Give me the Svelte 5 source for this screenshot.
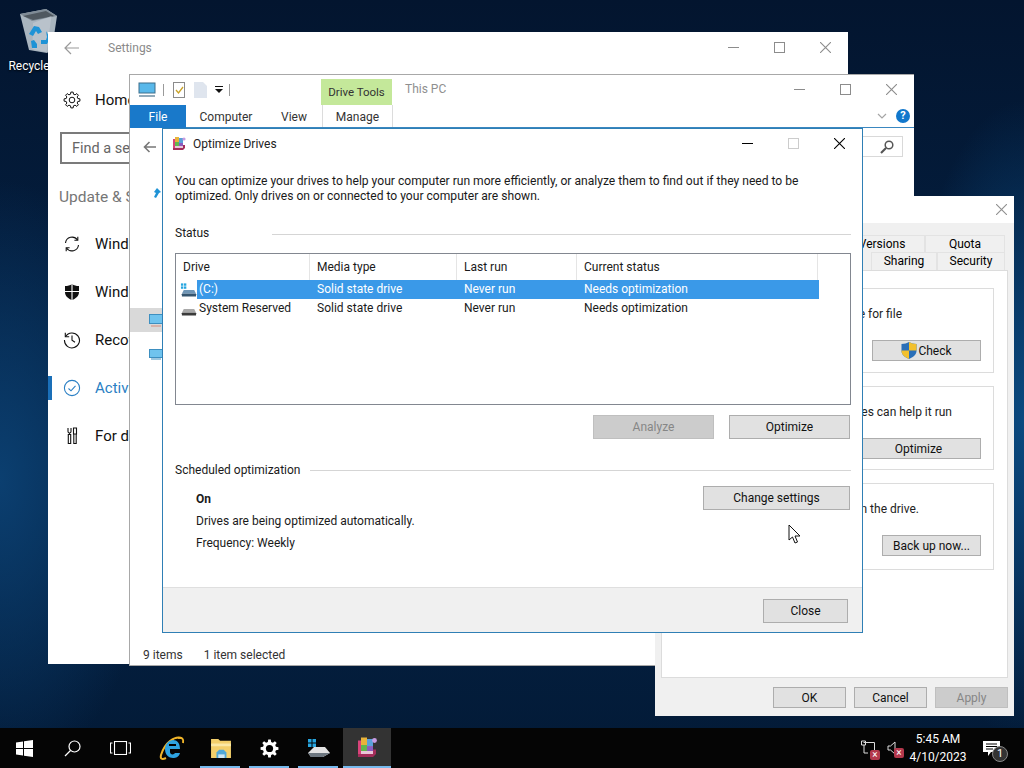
<script>
    // outline of a cog, used by the settings entries
    function cog(cx, cy, ro, ri, teeth) {
        let d = ''
        const step = (Math.PI * 2) / teeth
        for (let i = 0; i < teeth; i++) {
            const a = i * step
            const pts = [[a - step * 0.32, ri], [a - step * 0.18, ro], [a + step * 0.18, ro], [a + step * 0.32, ri]]
            for (const [t, r] of pts) {
                d += (d ? 'L' : 'M') + (cx + Math.cos(t) * r).toFixed(2) + ' ' + (cy + Math.sin(t) * r).toFixed(2)
            }
        }
        return d + 'Z'
    }

    const columns = ['Drive', 'Media type', 'Last run', 'Current status']
    const drives = [
        { name: '(C:)', selected: true, system: true },
        { name: 'System Reserved', selected: false, system: false }
    ]
    const navItems = [
        { label: 'Windows Update', icon: 'sync' },
        { label: 'Windows Security', icon: 'shield' },
        { label: 'Recovery', icon: 'history' },
        { label: 'Activation', icon: 'check', active: true },
        { label: 'For developers', icon: 'tools' }
    ]
</script>

{#snippet defrag(size)}
    <svg width={size} height={size} viewBox="0 0 16 16">
        <rect x="2" y="3" width="10" height="11" fill="#d8437a"/>
        <rect x="4" y="1" width="4" height="5" fill="#e8b33a"/>
        <rect x="8" y="2" width="4" height="5" fill="#5a9fd8"/>
        <rect x="4" y="6" width="4" height="4" fill="#62b74e"/>
        <rect x="8" y="7" width="4" height="4" fill="#8a5bc0"/>
        <rect x="4" y="10" width="8" height="2" fill="#e9c6d8"/>
        <path d="M2 14h10l2-2V9h-2v3H2z" fill="#a32d5a"/>
        <circle cx="13" cy="3" r="1.6" fill="#c79be0"/>
    </svg>
{/snippet}

{#snippet driveIcon(system)}
    <svg width="18" height="18" viewBox="0 0 18 18">
        {#if system}
            <rect x="1" y="2" width="2.5" height="2.5" fill="#27a6e0"/>
            <rect x="4.2" y="2" width="2.5" height="2.5" fill="#27a6e0"/>
            <rect x="1" y="5.2" width="2.5" height="2.5" fill="#27a6e0"/>
            <rect x="4.2" y="5.2" width="2.5" height="2.5" fill="#27a6e0"/>
        {/if}
        <path d="M2 13l2-4h11l2 4z" fill={system ? '#6f95b5' : '#a9a9a9'}/>
        <rect x="2" y="13" width="15" height="3" rx="0.5" fill={system ? '#35556f' : '#3b3b3b'}/>
    </svg>
{/snippet}

{#snippet closeX(size, color)}
    <svg width={size} height={size} viewBox="0 0 10 10"><path d="M0 0l10 10M10 0L0 10" stroke={color} fill="none"/></svg>
{/snippet}

{#snippet controls(color, maxColor)}
    <div class="controls">
        <span class="ctl"><svg width="11" height="11" viewBox="0 0 11 11"><path d="M0 5.5h11" stroke={color}/></svg></span>
        <span class="ctl"><svg width="11" height="11" viewBox="0 0 11 11"><rect x="0.5" y="0.5" width="10" height="10" fill="none" stroke={maxColor}/></svg></span>
        <span class="ctl">{@render closeX(11, color)}</span>
    </div>
{/snippet}

{#snippet navIcon(name)}
    <svg width="18" height="18" viewBox="0 0 18 18" fill="none" stroke="currentColor" stroke-width="1.1">
        {#if name === 'sync'}
            <path d="M2.5 8A6.6 6.6 0 0 1 14.5 5M15.500 10a6.600 6.600 0 0 1-12 3"/>
            <path d="M14.800 1.800V5.300h-3.400M3.200 16.200v-3.500h3.400"/>
        {:else if name === 'shield'}
            <path d="M9 1c2 1.400 4.200 2 7 2v6c0 4-3 6.500-7 8-4-1.500-7-4-7-8V3c2.800 0 5-.6 7-2z" fill="currentColor" stroke="none"/>
            <path d="M9 1v16M2 8.500h14" stroke="#fff"/>
        {:else if name === 'history'}
            <path d="M2.600 5.500A7.500 7.500 0 1 1 1.500 9"/>
            <path d="M2.300 1.800v3.900h3.900M9 4.500V9.300l3 2"/>
        {:else if name === 'check'}
            <circle cx="9" cy="9" r="7.600"/>
            <path d="M5.500 9.500l2.500 2.300 4.500-5"/>
        {:else}
            <path d="M5 1v3.500a1.500 1.500 0 0 0 3 0V1M6.500 6.500v1M5.300 7.500h2.400v9H5.300zM10.500 1h3v6h-3zM10.800 7h2.400v9.500h-2.400z"/>
        {/if}
    </svg>
{/snippet}

<main class="desktop">
    <div class="recycle">
        <svg width="40" height="44" viewBox="0 0 40 44">
            <path d="M1 5l26-5 11 7-5 33-5 4-18-3z" fill="#a9b5bf"/>
            <path d="M1 5l26-5 11 7-25 5z" fill="#7f8b96"/>
            <path d="M4 7l23-5 8 5-21 4z" fill="#4f5860"/>
            <path d="M14 14l-.5 26 14 3 5-36z" fill="#c4ccd3" opacity="0.6"/>
            <path d="M10 25l5-8 5 1 3 5-4 2-2-3-3 5zM27 22l4 7-3 6h-6v-4l5 0 1-3zM12 32l3-1 3 4v4h-5z" fill="#1f93d6"/>
        </svg>
        <span>Recycle Bin</span>
    </div>

    <section class="window settings">
        <header class="set-title">
            <svg class="set-back" width="16" height="14" viewBox="0 0 16 14" fill="none" stroke="#9a9a9a" stroke-width="1.200"><path d="M15 7H1M7 1L1 7l6 6"/></svg>
            <span>Settings</span>
            {@render controls('#8c8c8c', '#8c8c8c')}
        </header>
        <div class="set-nav">
            <div class="home">
                <svg width="18" height="18" viewBox="0 0 18 18" fill="none" stroke="#111"><path d={cog(9, 9, 8, 6, 8)}/><circle cx="9" cy="9" r="2.800"/></svg>
                <span>Home</span>
            </div>
            <div class="find">Find a setting</div>
            <div class="group-title">Update &amp; Security</div>
            <ul>
                {#each navItems as item}
                    <li class:active={item.active}>
                        {@render navIcon(item.icon)}
                        <span>{item.label}</span>
                    </li>
                {/each}
            </ul>
        </div>
    </section>

    <section class="window explorer">
        <div class="qat">
            <svg width="20" height="16" viewBox="0 0 20 16"><rect x="2" y="1" width="16" height="10" fill="#58b8ea" stroke="#3d6f8c"/><path d="M2 14h16" stroke="#6d8ea3" stroke-width="1.500"/></svg>
            <i class="sep"></i>
            <svg class="qat-doc" width="13" height="16" viewBox="0 0 13 16"><rect x="0.500" y="0.500" width="11" height="15" fill="#fff" stroke="#8b8b8b"/><path d="M3 8l2.500 3L10 5" stroke="#c9a227" stroke-width="1.300" fill="none"/></svg>
            <svg width="13" height="16" viewBox="0 0 13 16"><path d="M0 0h9l4 4v12H0z" fill="#dfe5ee"/></svg>
            <svg class="qat-drop" width="8" height="8" viewBox="0 0 8 8"><path d="M0 0h8v1H0zM0 3h8L4 7z" fill="#111"/></svg>
            <i class="sep"></i>
            <div class="tool-tab">Drive Tools</div>
            <div class="path-title">This PC</div>
            {@render controls('#8c8c8c', '#8c8c8c')}
        </div>
        <nav class="ribbon">
            <span class="file">File</span>
            <span class="tab computer">Computer</span>
            <span class="tab view">View</span>
            <span class="tab manage">Manage</span>
            <svg class="chev" width="10" height="6" viewBox="0 0 10 6" fill="none" stroke="#a5a5a5" stroke-width="1.200"><path d="M1 1l4 4 4-4"/></svg>
            <span class="help">?</span>
        </nav>
        <div class="addr">
            <svg width="13" height="12" viewBox="0 0 13 12" fill="none" stroke="#777" stroke-width="1.600"><path d="M13 6H1.500M6.500 1L1.500 6l5 5"/></svg>
            <div class="search">
                <svg width="14" height="14" viewBox="0 0 14 14" fill="none" stroke="#555" stroke-width="1.500"><circle cx="9" cy="5" r="3.800"/><path d="M6 8l-5 5" stroke-width="2.200"/></svg>
            </div>
        </div>
        <div class="tree">
            <div class="tree-row"><svg width="10" height="12" viewBox="0 0 10 12"><path d="M4 1l4 4-2 1-3 5-2-1 2-4-2-1z" fill="#1f93d6"/></svg></div>
            <div class="tree-row current"><svg width="14" height="13" viewBox="0 0 14 13"><rect x="0.500" y="0.500" width="13" height="9" fill="#6fc3ee" stroke="#3d8fc0"/><path d="M2 12h10" stroke="#d38b7a"/></svg></div>
            <div class="tree-row"><svg width="14" height="13" viewBox="0 0 14 13"><rect x="0.500" y="2.500" width="13" height="8" fill="#6fc3ee" stroke="#3d8fc0"/><path d="M2 12h10" stroke="#3d8fc0"/></svg></div>
        </div>
        <footer class="status">
            <span>9 items</span>
            <span>1 item selected</span>
        </footer>
    </section>

    <section class="window props">
        <header class="props-title">
            <span class="props-close">{@render closeX(11, '#8f8f8f')}</span>
        </header>
        <div class="tabs">
            <div class="tab-row one"><span class="t">Previous Versions</span><span class="t">Quota</span></div>
            <div class="tab-row two"><span class="t">Sharing</span><span class="t">Security</span></div>
        </div>
        <div class="panel">
            <div class="box b1">
                <p class="p1">This option will check the drive for file</p>
                <div class="box-foot"><button class="btn w-check">
                    <svg width="16" height="17" viewBox="0 0 16 17"><path d="M8 0c2 1.300 4.500 2 7.500 2v7c0 3.500-3.500 6.500-7.500 8-4-1.500-7.500-4.500-7.500-8V2C3.500 2 6 1.300 8 0z" fill="#2a6fb8"/><path d="M8 0v8.500h7.500V2C12.500 2 10 1.300 8 0zM8 8.500V17c-4-1.500-7.500-4.500-7.500-8v-.5z" fill="#f2c02e"/></svg>
                    Check</button></div>
            </div>
            <div class="box b2">
                <p class="p2">Optimizing your computer's drives can help it run</p>
                <div class="box-foot"><button class="btn w-opt">Optimize</button></div>
            </div>
            <div class="box b3">
                <p class="p3">Back up all of the files on the drive.</p>
                <div class="box-foot"><button class="btn w-back">Back up now...</button></div>
            </div>
        </div>
        <div class="props-foot">
            <button class="btn w-ok">OK</button>
            <button class="btn w-ok">Cancel</button>
            <button class="btn w-ok off">Apply</button>
        </div>
    </section>

    <section class="window dialog">
        <header class="dlg-title">
            {@render defrag(16)}
            <span>Optimize Drives</span>
            <div class="controls">
                <span class="ctl"><svg width="11" height="11" viewBox="0 0 11 11"><path d="M0 5.500h11" stroke="#000"/></svg></span>
                <span class="ctl"><svg width="11" height="11" viewBox="0 0 11 11"><rect x="0.500" y="0.500" width="10" height="10" fill="none" stroke="#ccc"/></svg></span>
                <span class="ctl">{@render closeX(11, '#000')}</span>
            </div>
        </header>
        <div class="dlg-body">
            <p class="intro">You can optimize your drives to help your computer run more efficiently, or analyze them to find out if they need to be optimized. Only drives on or connected to your computer are shown.</p>
            <div class="rule s1"><span>Status</span><i></i></div>
            <div class="table">
                <div class="thead">
                    {#each columns as c}<span>{c}</span>{/each}
                </div>
                {#each drives as d}
                    <div class="row">
                        <span class="ico">{@render driveIcon(d.system)}</span>
                        <div class="cells" class:sel={d.selected}>
                            <span class="c-name">{d.name}</span>
                            <span>Solid state drive</span>
                            <span>Never run</span>
                            <span>Needs optimization</span>
                        </div>
                    </div>
                {/each}
            </div>
            <div class="actions">
                <button class="btn w-dlg off">Analyze</button>
                <button class="btn w-dlg">Optimize</button>
            </div>
            <div class="rule s2"><span>Scheduled optimization</span><i></i></div>
            <div class="sched">
                <div class="sched-text">
                    <strong>On</strong>
                    <span>Drives are being optimized automatically.</span>
                    <span>Frequency: Weekly</span>
                </div>
                <button class="btn w-change">Change settings</button>
            </div>
        </div>
        <footer class="dlg-foot">
            <button class="btn w-close">Close</button>
        </footer>
    </section>

    <svg class="cursor" width="14" height="20" viewBox="0 0 14 20"><path d="M1 1v15l3.500-3 2.500 6 2.500-1-2.500-6h5z" fill="#fff" stroke="#111"/></svg>

    <footer class="taskbar">
        <span class="tb">
            <svg width="17" height="17" viewBox="0 0 17 17" fill="#fff"><path d="M0 2.400l7-1V8H0zM8 1.300L17 0v8H8zM0 9h7v6.600l-7-1zM8 9h9v8l-9-1.300z"/></svg>
        </span>
        <span class="tb">
            <svg width="17" height="17" viewBox="0 0 17 17" fill="none" stroke="#fff" stroke-width="1.200"><circle cx="10.500" cy="6.500" r="5.500"/><path d="M6.500 10.500L1 16"/></svg>
        </span>
        <span class="tb">
            <svg width="21" height="14" viewBox="0 0 21 14" fill="none" stroke="#fff" stroke-width="1.100"><rect x="4.500" y="0.500" width="12" height="13"/><path d="M2.500 2H.5v10h2M18.500 2h2v10h-2"/></svg>
        </span>
        <span class="tb gap">
            <svg width="26" height="26" viewBox="0 0 26 26" fill="none">
                <path d="M22 3C16 1 6 7 2 20c-1 4 1 5 5 3" stroke="#f0b429" stroke-width="2"/>
                <path d="M19 3c4-1 6 1 5 5" stroke="#f0b429" stroke-width="2"/>
                <path d="M6 14h15c0-6-3-9-7-9s-8 4-8 9c0 6 4 9 8 9 3 0 6-1 7-5h-5c-1 2-5 2-5-1v-3z" fill="#2ea3e0"/>
                <rect x="10" y="9" width="7" height="2" fill="#000"/>
            </svg>
        </span>
        <span class="tb app">
            <svg width="22" height="19" viewBox="0 0 24 21"><path d="M1 0h8l2 2h12v19H1z" fill="#f3cf6b"/><rect x="1" y="5" width="22" height="3" fill="#fbe8a6"/><path d="M7 21v-6l3-3h5l3 3v6z" fill="#4fa7d8"/><rect x="9" y="17" width="7" height="4" fill="#cfe6f3"/></svg>
        </span>
        <span class="tb app">
            <svg width="19" height="19" viewBox="0 0 20 20"><path d={cog(10, 10, 9.500, 7, 8)} fill="#fff"/><circle cx="10" cy="10" r="3.800" fill="#000"/></svg>
        </span>
        <span class="tb app">
            <svg width="24" height="20" viewBox="0 0 24 20">
                <rect x="1" y="1" width="3.500" height="3.500" fill="#27a6e0"/><rect x="5.500" y="1" width="3.500" height="3.500" fill="#27a6e0"/><rect x="1" y="5.500" width="3.500" height="3.500" fill="#27a6e0"/><rect x="5.500" y="5.500" width="3.500" height="3.500" fill="#27a6e0"/>
                <path d="M1 15l6-6h11l5 6-7 4H4z" fill="#e3e3e3"/><path d="M1 15h22l-7 4H4z" fill="#6d7780"/>
            </svg>
        </span>
        <span class="tb app running">{@render defrag(24)}</span>

        <div class="tray">
            <span class="tray-ico">
                <svg width="18" height="17" viewBox="0 0 18 17" fill="none" stroke="#ddd"><path d="M3.500 2.500h11v8M4 5v8h4M1.500 1h4v4h-4z"/></svg>
                <i class="x">×</i>
            </span>
            <span class="tray-ico">
                <svg width="12" height="14" viewBox="0 0 12 14" fill="none" stroke="#ddd"><path d="M1 5h2.500L8 1v12L3.500 9H1z"/></svg>
                <i class="x">×</i>
            </span>
            <div class="clock"><span>5:45 AM</span><span>4/10/2023</span></div>
            <span class="notif">
                <svg width="17" height="15" viewBox="0 0 17 15"><path d="M0 0h17v11H8l-3 4v-4H0z" fill="#fff"/><path d="M3 3h11M3 5.500h11M3 8h7" stroke="#000"/></svg>
                <i>1</i>
            </span>
        </div>
    </footer>
</main>

<style>
    :global(body) {
        margin: 0;
        font-family: Roboto, "Noto Sans", sans-serif;
        font-size: 12px;
    }

    * {
        box-sizing: border-box;
    }

    p, ul {
        margin: 0;
        padding: 0;
    }

    .desktop {
        position: relative;
        width: 1024px;
        height: 768px;
        overflow: hidden;
        background:
            radial-gradient(ellipse 160px 300px at 0 480px, #0b3f70 0%, rgba(11, 63, 112, 0) 100%),
            radial-gradient(ellipse 120px 320px at 1024px 420px, #0b4a80 0%, rgba(11, 74, 128, 0) 100%),
            linear-gradient(#03152f, #042347 60%, #031a36);
    }

    .window {
        position: absolute;
        display: flex;
        flex-direction: column;
        background: #fff;
    }

    .controls {
        display: flex;
        margin-left: auto;
    }

    .ctl {
        display: flex;
        align-items: center;
        justify-content: center;
        width: 46px;
    }

    .recycle {
        position: absolute;
        left: 1px;
        top: 9px;
        width: 76px;
        display: flex;
        flex-direction: column;
        align-items: center;
        color: #fff;
        gap: 6px;
        text-shadow: 0 1px 2px #000;
    }

    /* settings window */
    .settings {
        left: 48px;
        top: 32px;
        width: 800px;
        height: 632px;
    }

    .set-title {
        display: flex;
        align-items: center;
        height: 31px;
        color: #8a8a8a;
        padding: 0 0 0 16px;
    }

    .set-back {
        margin-right: 28px;
    }

    .set-nav {
        width: 290px;
        padding-top: 24px;
    }

    .home {
        display: flex;
        align-items: center;
        gap: 14px;
        height: 26px;
        padding-left: 15px;
        font-size: 15px;
        color: #111;
    }

    .find {
        margin: 19px 0 0 12px;
        width: 268px;
        height: 32px;
        border: 2px solid #7b7b7b;
        padding-left: 10px;
        line-height: 29px;
        font-size: 14.500px;
        color: #666;
    }

    .group-title {
        margin: 24px 0 0 11px;
        font-size: 15.500px;
        color: #767676;
    }

    .set-nav ul {
        list-style: none;
        margin-top: 14px;
    }

    .set-nav li {
        position: relative;
        display: flex;
        align-items: center;
        gap: 14px;
        height: 48px;
        padding-left: 15px;
        font-size: 15px;
        color: #111;
    }

    .set-nav li.active {
        color: #2a7fc4;
    }

    .set-nav li.active::before {
        content: "";
        position: absolute;
        left: 0;
        top: 12px;
        width: 4px;
        height: 24px;
        background: #1a6fb8;
    }

    /* explorer */
    .explorer {
        left: 129px;
        top: 74px;
        width: 785px;
        height: 592px;
        border: 1px solid #a8a8a8;
        border-right: 0;
    }

    .qat {
        display: flex;
        align-items: center;
        height: 30px;
        padding-left: 7px;
    }

    .qat .controls {
        margin-bottom: 2px;
    }

    .sep {
        display: block;
        width: 1px;
        height: 12px;
        background: #9a9a9a;
        margin: 0 9px 0 6px;
    }

    .qat-doc {
        margin-right: 8px;
    }

    .qat-drop {
        margin-left: 8px;
    }

    .tool-tab {
        align-self: flex-end;
        width: 71px;
        height: 26px;
        margin-left: 82px;
        background: #c4e89a;
        line-height: 26px;
        text-align: center;
        font-size: 11.500px;
        color: #333;
    }

    .path-title {
        margin-left: 13px;
        color: #8f8f8f;
        margin-bottom: 2px;
    }

    .ribbon {
        display: flex;
        align-items: center;
        height: 23px;
        border-bottom: 1px solid #3a87c0;
        color: #333;
    }

    .file {
        width: 56px;
        height: 23px;
        background: #1979ca;
        color: #fff;
        line-height: 24px;
        text-align: center;
    }

    .tab {
        height: 22px;
        line-height: 24px;
        text-align: center;
    }

    .computer {
        width: 80px;
    }

    .view {
        width: 56px;
    }

    .manage {
        width: 71px;
        border-left: 1px solid #dcdcdc;
        border-right: 1px solid #dcdcdc;
    }

    .chev {
        margin-left: auto;
    }

    .help {
        width: 14px;
        height: 14px;
        border-radius: 50%;
        background: #1177cc;
        color: #fff;
        font-weight: 700;
        font-size: 11px;
        line-height: 14px;
        text-align: center;
        margin: 0 4px 0 9px;
    }

    .addr {
        display: flex;
        align-items: center;
        justify-content: space-between;
        height: 37px;
        padding: 0 11px 0 13px;
    }

    .search {
        width: 136px;
        height: 21px;
        border: 1px solid #d9d9d9;
        display: flex;
        align-items: center;
        justify-content: flex-end;
        padding-right: 8px;
    }

    .tree {
        flex: 1;
        padding-top: 16px;
        width: 33px;
    }

    .tree-row {
        height: 24px;
        display: flex;
        align-items: center;
        justify-content: flex-end;
    }

    .tree-row.current {
        margin-top: 103px;
        background: #d9d9d9;
    }

    .tree-row.current + .tree-row {
        margin-top: 9px;
    }

    .status {
        display: flex;
        gap: 21px;
        height: 22px;
        align-items: center;
        padding: 2px 0 0 13px;
        color: #333;
    }

    /* drive properties */
    .props {
        left: 655px;
        top: 196px;
        width: 359px;
        height: 520px;
        background: #f0f0f0;
    }

    .props-title {
        height: 27px;
        background: #fff;
        display: flex;
        justify-content: flex-end;
        align-items: center;
        padding-right: 7px;
    }

    .props-close {
        display: flex;
    }

    .tabs {
        margin-top: 12px;
        display: flex;
        flex-direction: column;
        align-items: flex-end;
        padding-right: 9px;
    }

    .tab-row {
        display: flex;
        height: 17px;
        line-height: 16px;
    }

    .tab-row.two {
        height: 18px;
        line-height: 17px;
    }

    .t {
        border: 1px solid #e3e3e3;
        border-bottom: 0;
        text-align: center;
        background: #f0f0f0;
    }

    .one .t:first-child {
        width: 135px;
    }

    .one .t:last-child {
        width: 80px;
    }

    .two .t:first-child {
        width: 66px;
    }

    .two .t:last-child {
        width: 68px;
    }

    .panel {
        margin: 0 6px;
        height: 408px;
        background: #fff;
        border: 1px solid #dcdcdc;
        padding: 17px 13px 0 7px;
        display: flex;
        flex-direction: column;
        gap: 13px;
    }

    .box {
        border: 1px solid #dcdcdc;
        padding: 17px 12px 0 0;
        color: #222;
    }

    .b1 {
        height: 85px;
    }

    .b2 {
        height: 84px;
    }

    .b3 {
        height: 87px;
    }

    .box p {
        white-space: nowrap;
        text-align: right;
        line-height: 16px;
    }

    .p1 {
        padding-right: 79px;
    }

    .p2 {
        padding-right: 29px;
    }

    .p3 {
        padding-right: 62px;
    }

    .box-foot {
        display: flex;
        justify-content: flex-end;
        margin-top: 18px;
    }

    .props-foot {
        display: flex;
        justify-content: flex-end;
        gap: 8px;
        padding: 9px 6px 0 0;
    }

    .btn {
        display: inline-flex;
        align-items: center;
        justify-content: center;
        gap: 1px;
        height: 21px;
        padding: 0;
        background: #e1e1e1;
        border: 1px solid #adadad;
        color: #111;
        font: inherit;
    }

    .btn.off {
        background: #cccccc;
        border-color: #bfbfbf;
        color: #868686;
    }

    .w-check {
        width: 109px;
    }

    .w-opt {
        width: 125px;
    }

    .w-back {
        width: 99px;
    }

    .w-ok {
        width: 73px;
    }

    /* optimize drives dialog */
    .dialog {
        left: 162px;
        top: 128px;
        width: 701px;
        height: 505px;
        border: 1px solid #2f7fb5;
        color: #1a1a1a;
    }

    .dlg-title {
        display: flex;
        align-items: center;
        gap: 6px;
        height: 30px;
        padding-left: 8px;
        color: #222;
    }

    .dlg-title .controls {
        margin-bottom: 2px;
    }

    .dlg-body {
        flex: 1;
        padding: 15px 11px 0 12px;
    }

    .intro {
        line-height: 15px;
        width: 650px;
        font-size: 12.100px;
    }

    .rule {
        display: flex;
        align-items: center;
    }

    .rule i {
        flex: 1;
        height: 1px;
        background: #d5d5d5;
        margin-top: 3px;
    }

    .s1 {
        margin-top: 20px;
        height: 18px;
        gap: 63px;
    }

    .s2 {
        margin-top: 22px;
        height: 18px;
        gap: 10px;
    }

    .s2 i {
        margin-top: 0;
    }

    .table {
        margin-top: 11px;
        height: 152px;
        border: 1px solid #828790;
    }

    .thead {
        display: grid;
        grid-template-columns: 134px 147px 120px 241px;
        height: 26px;
    }

    .thead span {
        line-height: 26px;
        padding-left: 7px;
        border-right: 1px solid #e5e5e5;
    }

    .row {
        display: flex;
        height: 19px;
    }

    .ico {
        display: flex;
        align-items: center;
        width: 21px;
        padding-left: 4px;
    }

    .cells {
        display: grid;
        grid-template-columns: 113px 147px 120px 242px;
        line-height: 18px;
    }

    .cells span {
        padding-left: 7px;
    }

    .cells .c-name {
        padding-left: 2px;
    }

    .cells.sel {
        background: #3a99e8;
        color: #fff;
    }

    .actions {
        display: flex;
        justify-content: flex-end;
        gap: 15px;
        margin-top: 10px;
        padding-right: 1px;
    }

    .w-dlg {
        width: 121px;
        height: 24px;
    }

    .sched {
        display: flex;
        justify-content: space-between;
        align-items: flex-start;
        margin-top: 7px;
        padding: 0 1px 0 21px;
    }

    .sched-text {
        display: flex;
        flex-direction: column;
        line-height: 22px;
        padding-top: 2px;
    }

    .sched-text strong {
        font-weight: 700;
    }

    .w-change {
        width: 147px;
        height: 24px;
    }

    .dlg-foot {
        height: 45px;
        background: #f0f0f0;
        border-top: 1px solid #dfdfdf;
        display: flex;
        justify-content: flex-end;
        align-items: center;
        padding: 2px 14px 0 0;
    }

    .w-close {
        width: 85px;
        height: 24px;
    }

    .cursor {
        position: absolute;
        left: 788px;
        top: 524px;
    }

    /* taskbar */
    .taskbar {
        position: absolute;
        left: 0;
        right: 0;
        bottom: 0;
        height: 40px;
        background: #050505;
        display: flex;
        color: #fff;
    }

    .tb {
        position: relative;
        display: flex;
        align-items: center;
        justify-content: center;
        width: 48px;
        height: 40px;
    }

    .tb.gap {
        margin-left: 4px;
    }

    .tb.app {
        width: 49px;
    }

    .tb.app::after {
        content: "";
        position: absolute;
        left: 4px;
        right: 5px;
        bottom: 0;
        height: 2px;
        background: #76b9ed;
    }

    .tb.running {
        width: 48px;
        background: #333;
    }

    .tb.running::after {
        left: 0;
        right: 0;
    }

    .tray {
        margin-left: auto;
        display: flex;
        align-items: center;
    }

    .tray-ico {
        position: relative;
        display: flex;
        width: 24px;
        justify-content: center;
    }

    .x {
        position: absolute;
        right: 1px;
        bottom: -3px;
        width: 10px;
        height: 10px;
        border-radius: 2px;
        background: #b3384c;
        font-style: normal;
        font-size: 10px;
        line-height: 10px;
        text-align: center;
    }

    .clock {
        display: flex;
        flex-direction: column;
        align-items: center;
        width: 66px;
        line-height: 18px;
    }

    .notif {
        position: relative;
        display: flex;
        width: 40px;
        justify-content: center;
        margin-right: 13px;
    }

    .notif i {
        position: absolute;
        left: 21px;
        top: 5px;
        width: 16px;
        height: 16px;
        border-radius: 50%;
        border: 1px solid #888;
        background: #333;
        font-style: normal;
        font-size: 11px;
        line-height: 14px;
        text-align: center;
    }
</style>
